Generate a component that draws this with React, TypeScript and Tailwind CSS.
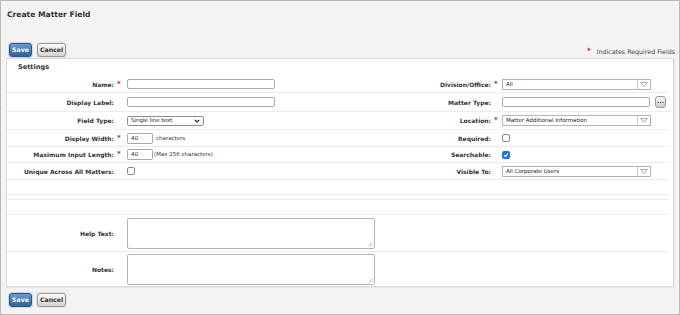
import type { ReactNode } from "react"

const font = { fontFamily: '"DejaVu Sans", Verdana, sans-serif' }

function Req() {
  return <span className="text-[7px] font-bold leading-none text-[#a8284a]">*</span>
}

function SaveButton() {
  return (
    <button className="h-[14px] w-[23px] rounded-[3px] border border-[#2b5688] bg-gradient-to-b from-[#6b9bd0] to-[#2f6199] text-[6.2px] font-bold leading-none text-white shadow-[0_0_0_1px_#c9d6e4]">
      Save
    </button>
  )
}

function CancelButton() {
  return (
    <button className="h-[14px] w-[29px] rounded-[3px] border border-[#9a9a9a] bg-gradient-to-b from-[#fafafa] to-[#d2d2d2] text-[6.2px] font-bold leading-none text-[#333] shadow-[0_0_0_1px_#e2e2e2]">
      Cancel
    </button>
  )
}

function TextBox({ w, h = 10, value }: { w: number; h?: number; value?: string }) {
  return (
    <div
      className="flex shrink-0 items-center rounded-[2px] border border-[#a9a9a9] bg-white pl-[3px] text-[5.5px] text-[#222]"
      style={{ width: w, height: h }}
    >
      {value}
    </div>
  )
}

function Combo({ value }: { value: string }) {
  return (
    <div className="flex h-[11px] w-[149px] shrink-0 items-stretch border border-[#b4b4b4] bg-white text-[5.5px] text-[#222]">
      <div className="flex flex-1 items-center pl-[3px]">{value}</div>
      <div className="flex w-[13px] items-center justify-center border-l border-[#c8c8c8]">
        <svg width="8" height="5" viewBox="0 0 8 5">
          <path d="M0.5 0.5 L7.5 0.5 L4 4.5 Z" fill="#f4f4f4" stroke="#9c9c9c" strokeWidth="0.8" />
        </svg>
      </div>
    </div>
  )
}

function Check({ checked = false }: { checked?: boolean }) {
  if (checked) {
    return (
      <div className="flex h-[8px] w-[8px] shrink-0 items-center justify-center rounded-[2px] bg-[#1b73e8]">
        <svg width="6" height="6" viewBox="0 0 6 6">
          <path d="M1 3.2 L2.4 4.6 L5 1.4" fill="none" stroke="white" strokeWidth="1.1" />
        </svg>
      </div>
    )
  }
  return <div className="h-[8px] w-[8px] shrink-0 rounded-[2px] border border-[#8a8a8a] bg-white" />
}

function Area() {
  return (
    <div className="relative h-[31px] w-[248px] shrink-0 rounded-[2px] border border-[#b4b4b4] bg-white">
      <svg className="absolute bottom-[1px] right-[1px]" width="5" height="5" viewBox="0 0 5 5">
        <path d="M4.5 0.5 L0.5 4.5 M4.5 2.5 L2.5 4.5" stroke="#a8a8a8" strokeWidth="0.8" />
      </svg>
    </div>
  )
}

function Cell({
  label,
  req,
  children,
  labelW,
  reqW,
}: {
  label?: string
  req?: boolean
  children?: ReactNode
  labelW: number
  reqW: number
}) {
  return (
    <div className="flex items-center">
      <div className="shrink-0 text-right text-[6px] font-bold text-[#333]" style={{ width: labelW }}>
        {label}
      </div>
      <div className="flex shrink-0 items-center pl-[3px]" style={{ width: reqW }}>
        {req && <Req />}
      </div>
      {children}
    </div>
  )
}

function Row({
  h,
  left,
  right,
  line = true,
}: {
  h: number
  left?: ReactNode
  right?: ReactNode
  line?: boolean
}) {
  return (
    <div
      className={"flex items-center " + (line ? "border-t border-[#ececec]" : "")}
      style={{ height: h }}
    >
      <div className="w-[333px] shrink-0">{left}</div>
      <div>{right}</div>
    </div>
  )
}

const L = { labelW: 107, reqW: 13 }
const R = { labelW: 151, reqW: 11 }

export default function App() {
  return (
    <div style={font} className="flex h-[315px] w-[680px] flex-col border border-[#b8b8b8] bg-[#f3f3f3]">
      <div className="pl-[6px] pt-[9px] text-[7.6px] font-bold leading-[10px] text-[#333]">
        Create Matter Field
      </div>

      <div className="mt-[23px] flex items-end justify-between pl-[8px] pr-[4px]">
        <div className="flex gap-[5px]">
          <SaveButton />
          <CancelButton />
        </div>
        <div className="flex items-center gap-[6px] pb-[1px] text-[6.3px] text-[#444]">
          <Req />
          <span>Indicates Required Fields</span>
        </div>
      </div>

      <div className="mx-[5px] mt-[1px] flex h-[229px] flex-col border border-[#d9d9d9] bg-white shadow-[1px_1px_0_#e6e6e6]">
        <div className="flex h-[17px] items-center pl-[11px] text-[6.6px] font-bold text-[#333]">
          Settings
        </div>
        <div className="mr-[4px] flex flex-col">
          <Row
            h={16}
            line={false}
            left={<Cell label="Name:" req {...L}><TextBox w={148} /></Cell>}
            right={<Cell label="Division/Office:" req {...R}><Combo value="All" /></Cell>}
          />
          <Row
            h={19}
            left={<Cell label="Display Label:" {...L}><TextBox w={148} /></Cell>}
            right={
              <Cell label="Matter Type:" {...R}>
                <TextBox w={148} />
                <button className="ml-[5px] flex h-[12px] w-[11px] shrink-0 items-end justify-center rounded-[3px] border border-[#9a9a9a] bg-gradient-to-b from-[#f8f8f8] to-[#cfcfcf] pb-[3px] text-[6px] font-bold leading-none text-[#333]">
                  ...
                </button>
              </Cell>
            }
          />
          <Row
            h={18}
            left={
              <Cell label="Field Type:" {...L}>
                <div className="flex h-[10px] w-[77px] shrink-0 items-center justify-between rounded-[2px] border border-[#8f8f8f] bg-white pl-[3px] pr-[3px] text-[5.5px] text-[#222]">
                  <span>Single line text</span>
                  <svg width="6" height="4" viewBox="0 0 6 4">
                    <path d="M0.8 0.8 L3 3 L5.2 0.8" fill="none" stroke="#222" strokeWidth="1.2" />
                  </svg>
                </div>
              </Cell>
            }
            right={<Cell label="Location:" req {...R}><Combo value="Matter Additional Information" /></Cell>}
          />
          <Row
            h={17}
            left={
              <Cell label="Display Width:" req {...L}>
                <TextBox w={26} h={11} value="40" />
                <span className="ml-[3px] text-[5.5px] text-[#333]">characters</span>
              </Cell>
            }
            right={<Cell label="Required:" {...R}><Check /></Cell>}
          />
          <Row
            h={16}
            left={
              <Cell label="Maximum Input Length:" req {...L}>
                <TextBox w={26} h={11} value="40" />
                <span className="ml-[1px] text-[5.5px] text-[#333]">(Max 256 characters)</span>
              </Cell>
            }
            right={<Cell label="Searchable:" {...R}><Check checked /></Cell>}
          />
          <Row
            h={17}
            left={<Cell label="Unique Across All Matters:" {...L}><Check /></Cell>}
            right={<Cell label="Visible To:" {...R}><Combo value="All Corporate Users" /></Cell>}
          />
          <Row h={15} />
          <Row h={5} />
          <Row h={15} />
          <Row h={37} left={<Cell label="Help Text:" {...L}><Area /></Cell>} />
          <Row h={35} left={<Cell label="Notes:" {...L}><Area /></Cell>} />
        </div>
      </div>

      <div className="mt-[6px] flex gap-[5px] pl-[8px]">
        <SaveButton />
        <CancelButton />
      </div>
    </div>
  )
}
